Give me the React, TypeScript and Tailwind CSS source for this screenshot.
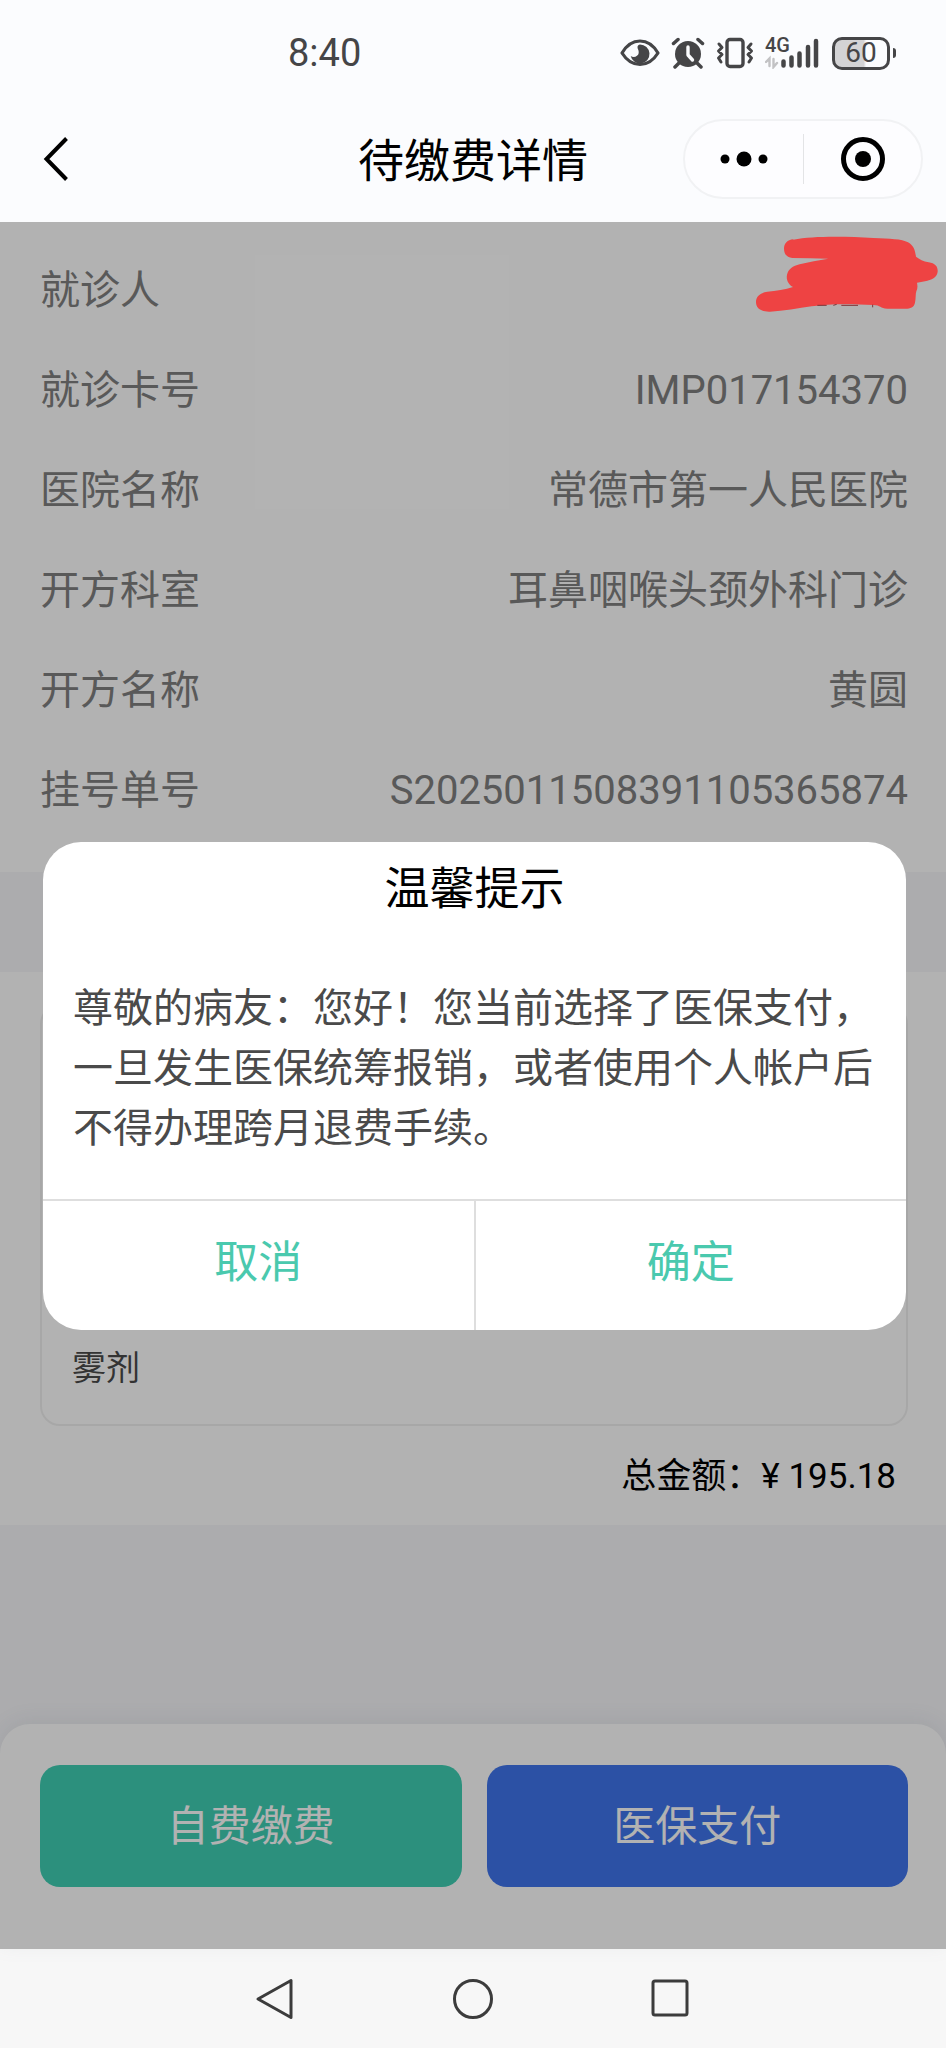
import { useState } from 'react';

const details = [
  { label: '就诊人', value: '' },
  { label: '就诊卡号', value: 'IMP017154370' },
  { label: '医院名称', value: '常德市第一人民医院' },
  { label: '开方科室', value: '耳鼻咽喉头颈外科门诊' },
  { label: '开方名称', value: '黄圆' },
  { label: '挂号单号', value: 'S2025011508391105365874' },
];

function StatusBar() {
  return (
    <div className="flex h-[106px] items-center justify-between pl-[288px] pr-[50px] text-[#454547]">
      <span className="text-[38px] leading-none">8:40</span>
      <div className="flex items-center gap-[11px]">
        {/* Ojo */}
        <svg width="40" height="32" viewBox="0 0 40 32" fill="none">
          <path d="M2 16C7 7.500 13 4 20 4s13 3.500 18 12c-5 8-11 11.500-18 11.500S7 24 2 16Z" stroke="currentColor" strokeWidth="3.200" strokeLinejoin="round" />
          <path d="M20 7.500a9.500 9.500 0 1 1-9.300 11.500c3 2 7.500.5 8-3 .4-3-1.500-4-1.200-6.200.2-1.300 1.200-2 2.500-2.300Z" fill="currentColor" />
        </svg>
        {/* Alarma */}
        <svg width="34" height="32" viewBox="0 0 34 32" fill="none" stroke="currentColor" strokeLinecap="round">
          <circle cx="17" cy="17" r="13" fill="currentColor" stroke="none" />
          <path d="M2.500 6.500 7 2.500M31.500 6.500 27 2.500M8 26l-4 4M26 26l4 4" strokeWidth="3.500" />
          <path d="M17 10v8l4.500 5" stroke="#fbfcfe" strokeWidth="3.400" strokeLinejoin="round" />
        </svg>
        {/* Vibración */}
        <svg width="38" height="32" viewBox="0 0 38 32" fill="none" stroke="currentColor" strokeWidth="3" strokeLinejoin="round" strokeLinecap="round">
          <rect x="11" y="2.500" width="16" height="27" rx="3" strokeWidth="3.400" />
          <path d="m3 7 3 3.500-3.500 3.500L6 17.500 2.500 21 5 25M35 7l-3 3.500 3.500 3.500-3.500 3.500 3.500 3.500-2.500 4" />
        </svg>
        {/* Cobertura */}
        <div className="relative h-8 w-14">
          <span className="absolute left-0 top-0 text-[20px] font-medium leading-4">4G</span>
          <svg width="56" height="32" viewBox="0 0 56 32" fill="none" stroke="currentColor" strokeWidth="4.500" strokeLinecap="round">
            <path d="M18.500 24.500v4M26.500 20.500v8M34.500 16.500v12M43 10v18.500M51 4v24.500" />
            <path d="M4.500 29v-7.500L1 25M8.500 22v8l3.500-4" stroke="#c2c2c4" strokeWidth="2.400" />
          </svg>
        </div>
        <div className="flex items-center gap-[3px]">
          <div className="flex h-[33px] w-[58px] items-center justify-center rounded-[10px] border-[3px] border-[#454547] bg-linear-to-r from-[#d3d3d5] from-55% to-[#fbfcfe] to-60% text-[28px] leading-none">
            60
          </div>
          <div className="h-[10px] w-[3px] rounded-r-sm bg-[#454547]" />
        </div>
      </div>
    </div>
  );
}

function NavBar() {
  return (
    <div className="grid h-[116px] grid-cols-[1fr_auto_1fr] items-start px-[23px] pt-[13px] text-black">
      <button type="button" aria-label="返回" className="ml-4 flex h-20 w-12 items-center">
        <svg width="38" height="48" viewBox="0 0 38 48" fill="none" stroke="currentColor" strokeWidth="4">
          <path d="M27.500 3.500 7.500 24l20 20.500" />
        </svg>
      </button>
      <h1 className="text-[46px] leading-[84px]">待缴费详情</h1>
      <div className="flex h-20 w-[240px] items-center justify-self-end rounded-full border-2 border-[#f1f2f4] bg-[#fdfdff]">
        <button type="button" aria-label="更多" className="flex flex-1 justify-center">
          <svg width="52" height="20" viewBox="0 0 52 20" fill="currentColor">
            <circle cx="7" cy="10" r="4.500" />
            <circle cx="26" cy="10" r="7.500" />
            <circle cx="45" cy="10" r="4.500" />
          </svg>
        </button>
        <div className="h-[50px] w-px bg-[#e3e4e6]" />
        <button type="button" aria-label="关闭" className="flex flex-1 justify-center">
          <svg width="46" height="46" viewBox="0 0 46 46" fill="none">
            <circle cx="24" cy="23" r="19.500" stroke="currentColor" strokeWidth="5" />
            <circle cx="24" cy="23" r="8" fill="currentColor" />
          </svg>
        </button>
      </div>
    </div>
  );
}

function Scribble() {
  return (
    <svg className="absolute right-0 top-0" width="206" height="110" viewBox="0 6 618 330">
      <path
        d="M160 59C220 47 320 49 400 54c50 3 85 2 104 13 18 10 21 24 24 43 10 8 22 14 38 17 20 3 28 13 27 28-2 18-18 24-38 29l-24 4c2 10 2 18-2 26-3 10-1 22-4 34-3 14-14 18-28 18h-55c-22 0-20-11-42-11-60-3-130-5-185 4-40 6-85 14-125 16-26 1-42-10-42-29 0-18 14-28 34-31 26-3 54-6 77-14-14-8-21-22-18-36 3-17 18-27 38-32 28-8 56-12 86-17-36-1-72-1-108-2-16-1-25-12-25-28 0-16 10-26 28-28Z"
        fill="#ee4343"
      />
      <path d="M232 256h28M280 256l10-3M304 256h50M398 254v8" stroke="#7d3335" strokeWidth="3" />
    </svg>
  );
}

export default function App() {
  const [open, setOpen] = useState(true);

  return (
    <div className="flex min-h-screen flex-col bg-[#fbfcfe] font-['Roboto','Noto_Sans_CJK_SC',sans-serif]">
      <header>
        <StatusBar />
        <NavBar />
      </header>

      <main className="relative flex flex-1 flex-col bg-[#f6f6f9]">
        {/* Datos del paciente */}
        <dl className="mb-[100px] bg-white pb-[31px] pl-10 pr-[38px] pt-[19px] text-[40px] text-[#808080]">
          {details.map((item) => (
            <div key={item.label} className="flex h-[100px] items-center justify-between">
              <dt>{item.label}</dt>
              <dd>{item.value}</dd>
            </div>
          ))}
        </dl>

        {/* Medicamentos e importe total */}
        <section className="mb-[199px] flex flex-1 flex-col bg-white pl-10 pr-[38px] pt-8">
          <div className="flex flex-1 items-end rounded-[20px] border-2 border-[#f0f0f0] px-[30px] pb-[26px] text-[34px] leading-[60px] text-[#4a4a4a]">
            <p className="w-[240px]">糠酸莫米松鼻喷雾剂</p>
          </div>
          <p className="pr-[12px] pt-[2px] text-right text-[35px] leading-[97px] text-black">总金额：¥ 195.18</p>
        </section>

        {/* Botones de pago */}
        <div className="flex gap-[25px] rounded-t-[30px] bg-white pb-[62px] pl-10 pr-[38px] pt-[41px] text-[42px] text-white shadow-[0_-4px_20px_rgba(110,130,150,0.1)]">
          <button type="button" className="h-[122px] flex-1 rounded-[20px] bg-[#3fcfb4]">
            自费缴费
          </button>
          <button type="button" onClick={() => setOpen(true)} className="h-[122px] flex-1 rounded-[20px] bg-[#3f75ed]">
            医保支付
          </button>
        </div>

        {open && (
          <div className="absolute inset-0 flex items-center justify-center bg-black/30 pl-[43px] pr-10">
            <div role="dialog" aria-labelledby="tip-title" className="w-full overflow-hidden rounded-[38px] bg-white">
              <h2 id="tip-title" className="text-center text-[45px] leading-[96px] text-black">
                温馨提示
              </h2>
              <p className="px-[30px] pb-10 pt-[41px] text-[40px] leading-[60px] text-[#4a4a4a]">
                尊敬的病友：您好！您当前选择了医保支付，一旦发生医保统筹报销，或者使用个人帐户后不得办理跨月退费手续。
              </p>
              <div className="flex border-t-2 border-[#dedede] text-[44px] leading-[124px] text-[#4ac9ae]">
                <button type="button" onClick={() => setOpen(false)} className="flex-1 border-r-2 border-[#dedede] pb-[5px]">
                  取消
                </button>
                <button type="button" onClick={() => setOpen(false)} className="flex-1 pb-[5px]">
                  确定
                </button>
              </div>
            </div>
          </div>
        )}
        <Scribble />
      </main>

      {/* Barra de navegación del sistema */}
      <nav className="flex h-[99px] items-center justify-center gap-[157px] bg-[#f7f7f7] text-[#3c3c3c]">
        <button type="button" aria-label="后退">
          <svg width="40" height="42" viewBox="0 0 40 42" fill="none" stroke="currentColor" strokeWidth="3" strokeLinejoin="round">
            <path d="M36 2.500v37L3 21Z" />
          </svg>
        </button>
        <button type="button" aria-label="主页">
          <svg width="42" height="42" viewBox="0 0 42 42" fill="none" stroke="currentColor" strokeWidth="3">
            <circle cx="21" cy="21" r="18.500" />
          </svg>
        </button>
        <button type="button" aria-label="最近任务">
          <svg width="40" height="42" viewBox="0 0 40 42" fill="none" stroke="currentColor" strokeWidth="3">
            <rect x="2" y="3" width="34" height="34" rx="2" />
          </svg>
        </button>
      </nav>
    </div>
  );
}
